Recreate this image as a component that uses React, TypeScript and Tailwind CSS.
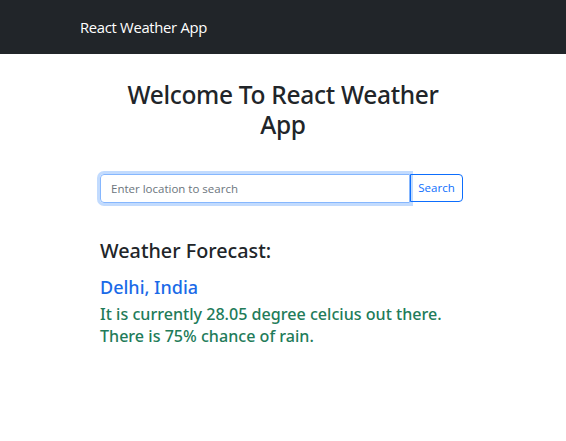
export default function App() {
  return (
    <div className="min-h-[441px] bg-white font-['Open_Sans',sans-serif] text-[#212529]">
      <nav className="flex h-[54px] items-center bg-[#212529] pl-[80px]">
        <span className="text-[14.8px] tracking-[-0.3px] text-white">React Weather App</span>
      </nav>

      <main className="mx-auto w-[366px] pt-[26px] font-['Noto_Sans',sans-serif]">
        <h2 className="mx-auto w-[340px] text-center text-[24.5px] leading-[30px] font-medium tracking-[-0.3px]">
          Welcome To React Weather App
        </h2>

        <div className="mt-[34px] flex h-[29px] font-['Open_Sans',sans-serif]">
          <input
            type="text"
            placeholder="Enter location to search"
            className="h-full w-[310px] rounded-l-[4px] border border-[#86b7fe] px-[10px] text-[11.5px] shadow-[0_0_0_3px_rgba(13,110,253,0.25)] outline-none placeholder:text-[#6c757d]"
          />
          <button
            type="button"
            className="h-[28px] w-[53px] rounded-r-[4px] border border-[#0d6efd] text-[11.5px] text-[#0d6efd]"
          >
            Search
          </button>
        </div>

        <h4 className="mt-[36px] text-[19.8px] leading-[24px] font-medium">Weather Forecast:</h4>
        <h5 className="mt-[13px] text-[18px] leading-[22px] font-medium text-[#1a6ae8]">Delhi, India</h5>
        <p className="mt-[6px] text-[16.1px] leading-[21.5px] font-medium text-[#227b59]">
          It is currently 28.05 degree celcius out there.
          <br />
          There is 75% chance of rain.
        </p>
      </main>
    </div>
  );
}
